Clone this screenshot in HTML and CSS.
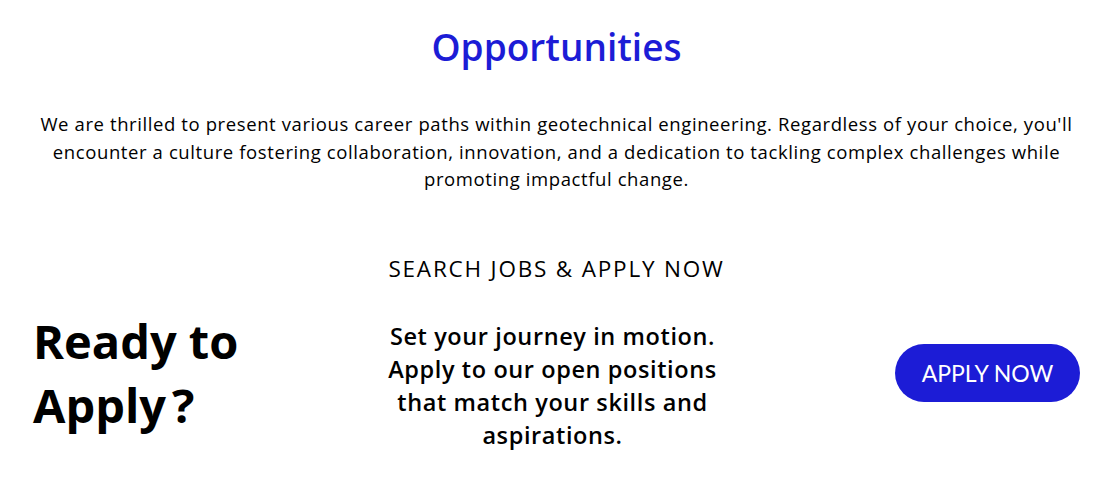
FILE: index.html
```html
<!DOCTYPE html>
<html lang="en">
<head>
<meta charset="utf-8">
<title>Opportunities</title>
<link rel="stylesheet" href="styles.css">
</head>
<body>
<section class="opps">
  <h1 class="opps-title">Opportunities</h1>
  <p class="opps-intro">We are thrilled to present various career paths within geotechnical engineering. Regardless of your choice, you'll encounter a culture fostering collaboration, innovation, and a dedication to tackling complex challenges while promoting impactful change.</p>
  <h2 class="opps-sub">SEARCH JOBS &amp; APPLY NOW</h2>
  <div class="apply-row">
    <h3 class="apply-title">Ready to Apply&#8239;?</h3>
    <p class="apply-text">Set your journey in motion. Apply to our open positions that match your skills and aspirations.</p>
    <a class="apply-btn" href="#">APPLY NOW</a>
  </div>
</section>
</body>
</html>
```
FILE: styles.css
```css
* { box-sizing: border-box; }
html, body { margin: 0; padding: 0; background: #fff; }
body {
  font-family: "Open Sans", "Noto Sans", sans-serif;
  color: #000;
}
.opps {
  padding: 22px 33px 0;
  display: flex;
  flex-direction: column;
  align-items: center;
}
.opps-title {
  margin: 0;
  font-size: 37px;
  font-weight: 600;
  line-height: 50px;
  color: #1c1cd6;
}
.opps-intro {
  margin: 38px 0 0;
  max-width: 1040px;
  text-align: center;
  font-size: 18.5px;
  letter-spacing: 0.6px;
  line-height: 27.5px;
  font-weight: 400;
}
.opps-sub {
  margin: 61px 0 0;
  font-size: 22.5px;
  letter-spacing: 1.8px;
  font-weight: 400;
  line-height: 30px;
}
.apply-row {
  margin-top: 10px;
  width: 100%;
  display: grid;
  grid-template-columns: 1fr 350px 1fr;
  align-items: center;
}
.apply-title {
  margin: 0;
  font-size: 47px;
  font-weight: 700;
  line-height: 64px;
  max-width: 260px;
}
.apply-text {
  margin: 0 0 0 -8px;
  padding-top: 26px;
  text-align: center;
  font-size: 23.5px;
  letter-spacing: 0.6px;
  font-weight: 600;
  line-height: 33px;
}
.apply-btn {
  justify-self: end;
  width: 185px;
  height: 58px;
  border-radius: 29px;
  background: #1c1cd6;
  color: #fff;
  text-decoration: none;
  display: flex;
  align-items: center;
  justify-content: center;
  font-family: Lato, "Open Sans", sans-serif;
  font-size: 23px;
  font-weight: 400;
}
```
